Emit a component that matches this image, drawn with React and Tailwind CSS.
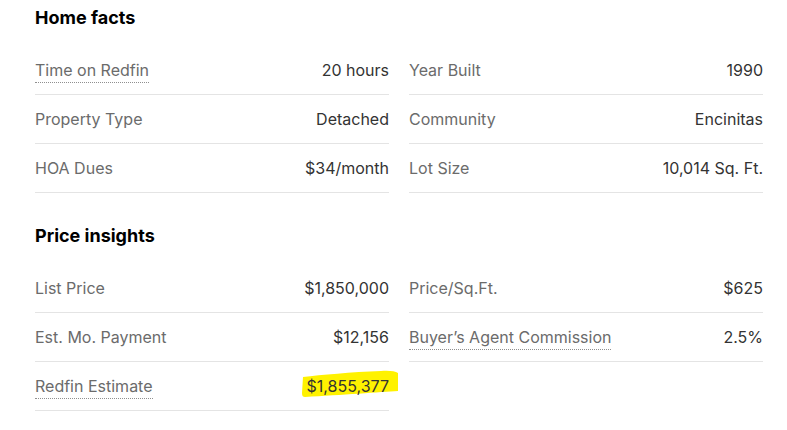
import React from "react";

function Row({ label, value, dotted, highlight }) {
  return (
    <div className="flex items-center justify-between h-[49px] border-b border-[#e4e4e4]">
      {label ? (
        <span
          className={
            "text-[16px] leading-[20px] text-[#6b6b6b] " +
            (dotted ? "border-b border-dotted border-[#8f8f8f] pb-[2px] translate-y-[1px]" : "")
          }
        >
          {label}
        </span>
      ) : (
        <span />
      )}
      {highlight ? (
        <span className="relative text-[16px] leading-[20px] text-[#333]">
          <svg
            className="absolute left-[-6px] top-[-7px] w-[98px] h-[32px]"
            viewBox="0 0 98 32"
          >
            <path
              d="M2 8 C20 6 50 3 80 2 C88 1.5 94 2 97 4 L97 22 C80 23 40 26 4 28 C2 28 1 27 1 24 Z"
              fill="#fff200"
            />
          </svg>
          <span className="relative">{value}</span>
        </span>
      ) : (
        <span className="text-[16px] leading-[20px] text-[#333]">{value}</span>
      )}
    </div>
  );
}

function Section({ title, left, right, className }) {
  return (
    <div className={className}>
      <h2 className="text-[18px] leading-[24px] font-bold text-black">{title}</h2>
      <div className="grid grid-cols-2 gap-x-[20px] mt-[16px]">
        <div className="flex flex-col">
          {left.map((r, i) => (
            <Row key={i} {...r} />
          ))}
        </div>
        <div className="flex flex-col">
          {right.map((r, i) => (
            <Row key={i} {...r} />
          ))}
        </div>
      </div>
    </div>
  );
}

export default function App() {
  return (
    <div
      className="w-[787px] h-[430px] bg-white overflow-hidden pl-[35px] pt-[6px]"
      style={{ fontFamily: "Inter, 'Noto Sans', sans-serif" }}
    >
      <div className="w-[728px]">
        <Section
          title="Home facts"
          left={[
            { label: "Time on Redfin", value: "20 hours", dotted: true },
            { label: "Property Type", value: "Detached" },
            { label: "HOA Dues", value: "$34/month" },
          ]}
          right={[
            { label: "Year Built", value: "1990" },
            { label: "Community", value: "Encinitas" },
            { label: "Lot Size", value: "10,014 Sq. Ft." },
          ]}
        />
        <Section
          className="mt-[31px]"
          title="Price insights"
          left={[
            { label: "List Price", value: "$1,850,000" },
            { label: "Est. Mo. Payment", value: "$12,156" },
            { label: "Redfin Estimate", value: "$1,855,377", dotted: true, highlight: true },
          ]}
          right={[
            { label: "Price/Sq.Ft.", value: "$625" },
            { label: "Buyer’s Agent Commission", value: "2.5%", dotted: true },
          ]}
        />
      </div>
    </div>
  );
}
